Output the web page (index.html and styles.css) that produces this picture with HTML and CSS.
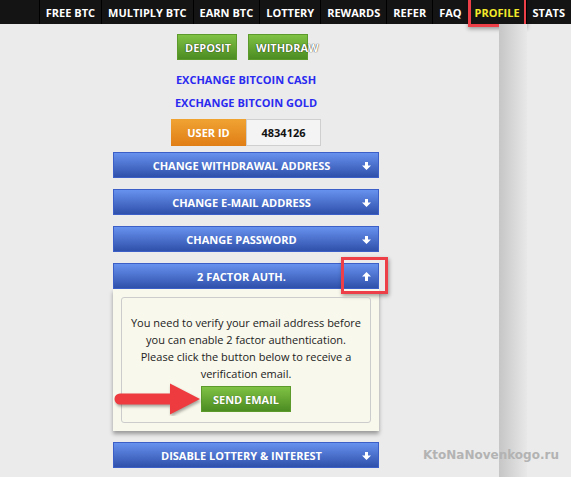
FILE: index.html
```html
<!DOCTYPE html>
<html lang="en">
<head>
    <meta charset="UTF-8">
    <title>Profile</title>
    <link rel="stylesheet" href="styles.css">
</head>
<body>
    <nav class="topbar">
        <a class="nav-item">FREE BTC</a>
        <a class="nav-item">MULTIPLY BTC</a>
        <a class="nav-item">EARN BTC</a>
        <a class="nav-item">LOTTERY</a>
        <a class="nav-item">REWARDS</a>
        <a class="nav-item">REFER</a>
        <a class="nav-item">FAQ</a>
        <a class="nav-item active">PROFILE</a>
        <a class="nav-item">STATS</a>
    </nav>

    <div class="main">
        <div class="actions">
            <a class="btn-green">DEPOSIT</a>
            <a class="btn-green">WITHDRAW</a>
        </div>

        <a class="exchange-link">EXCHANGE BITCOIN CASH</a>
        <a class="exchange-link">EXCHANGE BITCOIN GOLD</a>

        <div class="user-id">
            <span class="user-id-label">USER ID</span>
            <span class="user-id-value">4834126</span>
        </div>

        <div class="bar">CHANGE WITHDRAWAL ADDRESS
            <svg class="bar-arrow" viewBox="0 0 9 8"><path d="M3 0h3v3.4h3L4.5 8 0 3.4h3z" fill="#fff"/></svg>
        </div>
        <div class="bar">CHANGE E-MAIL ADDRESS
            <svg class="bar-arrow" viewBox="0 0 9 8"><path d="M3 0h3v3.4h3L4.5 8 0 3.4h3z" fill="#fff"/></svg>
        </div>
        <div class="bar">CHANGE PASSWORD
            <svg class="bar-arrow" viewBox="0 0 9 8"><path d="M3 0h3v3.4h3L4.5 8 0 3.4h3z" fill="#fff"/></svg>
        </div>

        <div class="bar open">2 FACTOR AUTH.
            <svg class="bar-arrow up" viewBox="0 0 9 9"><path d="M3 9h3V4.6h3L4.5 0 0 4.6h3z" fill="#fff"/></svg>
            <span class="highlight arrow-highlight"></span>
        </div>
        <div class="panel">
            <div class="panel-box">
                <p>You need to verify your email address before you can enable 2 factor authentication. Please click the button below to receive a verification email.</p>
                <button class="btn-green send">SEND EMAIL</button>
                <svg class="pointer" viewBox="0 0 92 34" width="92" height="34">
                    <path d="M6 11.5h50V1.5l30 15.5-30 15.5v-10H6a5.5 5.5 0 0 1 0-11z" fill="#ee3b3f" filter="drop-shadow(1px 2px 1.5px rgba(0,0,0,0.35))"/>
                </svg>
            </div>
        </div>

        <div class="bar">DISABLE LOTTERY &amp; INTEREST
            <svg class="bar-arrow" viewBox="0 0 9 8"><path d="M3 0h3v3.4h3L4.5 8 0 3.4h3z" fill="#fff"/></svg>
        </div>
    </div>

    <div class="side-shadow"></div>
    <div class="watermark">KtoNaNovenkogo.ru</div>
</body>
</html>
```

FILE: styles.css
```css
body {
    margin: 0;
    background-color: #ebebeb;
    font-family: 'Open Sans', 'Liberation Sans', sans-serif;
    height: 477px;
    overflow: hidden;
    position: relative;
}

.topbar {
    display: flex;
    justify-content: flex-end;
    height: 24px;
    background-color: #141414;
}

.nav-item {
    position: relative;
    display: flex;
    align-items: center;
    padding: 0 6px;
    border-left: 1px solid #000;
    color: #fff;
    font-size: 11px;
    font-weight: 700;
}

.nav-item.active {
    color: #f3e92a;
}

.nav-item.active::after {
    content: '';
    position: absolute;
    left: -1px;
    right: -1px;
    top: -4px;
    bottom: -3px;
    border: 3px solid #ec3f47;
    box-shadow: 0 2px 4px rgba(0,0,0,0.35);
}

.main {
    width: 266px;
    margin-left: 113px;
    display: flex;
    flex-direction: column;
    align-items: center;
}

.actions {
    display: flex;
    gap: 11px;
    margin-top: 10px;
    margin-left: -7px;
}

.btn-green {
    box-sizing: border-box;
    height: 26px;
    padding: 0 7px;
    border: 1px solid #5c9a2c;
    background: linear-gradient(#7fc244, #4c8c22);
    color: #fff;
    font-family: inherit;
    font-size: 11px;
    font-weight: 700;
    white-space: nowrap;
    text-shadow: 0 0 1px rgba(0,0,0,0.4);
}

.actions .btn-green {
    display: flex;
    align-items: center;
    width: 60px;
    padding: 0 0 0 7px;
    text-shadow: 0 0 1px rgba(0,0,0,0.7), 0 0 1px rgba(0,0,0,0.5);
}

.exchange-link {
    color: #2a2af0;
    font-size: 11px;
    font-weight: 700;
    line-height: 23px;
}

.exchange-link:first-of-type {
    margin-top: 8px;
}

.user-id {
    display: flex;
    height: 27px;
    margin-top: 5px;
}

.user-id-label {
    display: flex;
    align-items: center;
    justify-content: center;
    width: 75px;
    background: linear-gradient(#f0a332, #e07e16);
    color: #fff;
    font-size: 11px;
    font-weight: 700;
}

.user-id-value {
    display: flex;
    align-items: center;
    justify-content: center;
    width: 73px;
    background-color: #f4f4f4;
    border: 1px solid #cfcfcf;
    font-size: 11px;
    font-weight: 700;
    color: #111;
}

.bar {
    position: relative;
    box-sizing: border-box;
    width: 266px;
    height: 26px;
    margin-top: 11px;
    padding-right: 9px;
    display: flex;
    align-items: center;
    justify-content: center;
    border: 1px solid #3b5fc6;
    background: linear-gradient(#6792ee, #2f50ab);
    color: #fff;
    font-size: 11px;
    font-weight: 700;
}

.user-id + .bar {
    margin-top: 6px;
}

.bar-arrow {
    position: absolute;
    right: 7px;
    top: 9px;
    width: 9px;
    height: 8px;
}

.bar-arrow.up {
    top: 8px;
    height: 9px;
}

.highlight {
    position: absolute;
    border: 3px solid #ec3f47;
    box-shadow: 1px 2px 4px rgba(0,0,0,0.35);
}

.arrow-highlight {
    left: 227px;
    top: -7px;
    width: 41px;
    height: 31px;
}

.panel {
    box-sizing: border-box;
    width: 266px;
    padding: 8px 8px 8px;
    background-color: #f8f8ec;
    box-shadow: 0 3px 4px rgba(0,0,0,0.35);
}

.panel-box {
    position: relative;
    border: 1px solid #cccccc;
    border-radius: 3px;
    padding: 16px 0 10px;
    display: flex;
    flex-direction: column;
    align-items: center;
}

.panel-box p {
    width: 234px;
    margin: 0;
    text-align: center;
    font-size: 11px;
    line-height: 17px;
    color: #222;
}

.send {
    margin-top: 4px;
    padding: 0 11px;
}

.pointer {
    position: absolute;
    left: -8px;
    bottom: 6px;
}

.side-shadow {
    position: absolute;
    left: 499px;
    top: 24px;
    bottom: 0;
    width: 28px;
    background: linear-gradient(to right, #c6c6c6, #e8e8e8);
}

.watermark {
    position: absolute;
    left: 423px;
    top: 448px;
    font-family: 'DejaVu Sans', sans-serif;
    font-size: 12px;
    font-weight: 700;
    color: #b3b3b3;
}
```
